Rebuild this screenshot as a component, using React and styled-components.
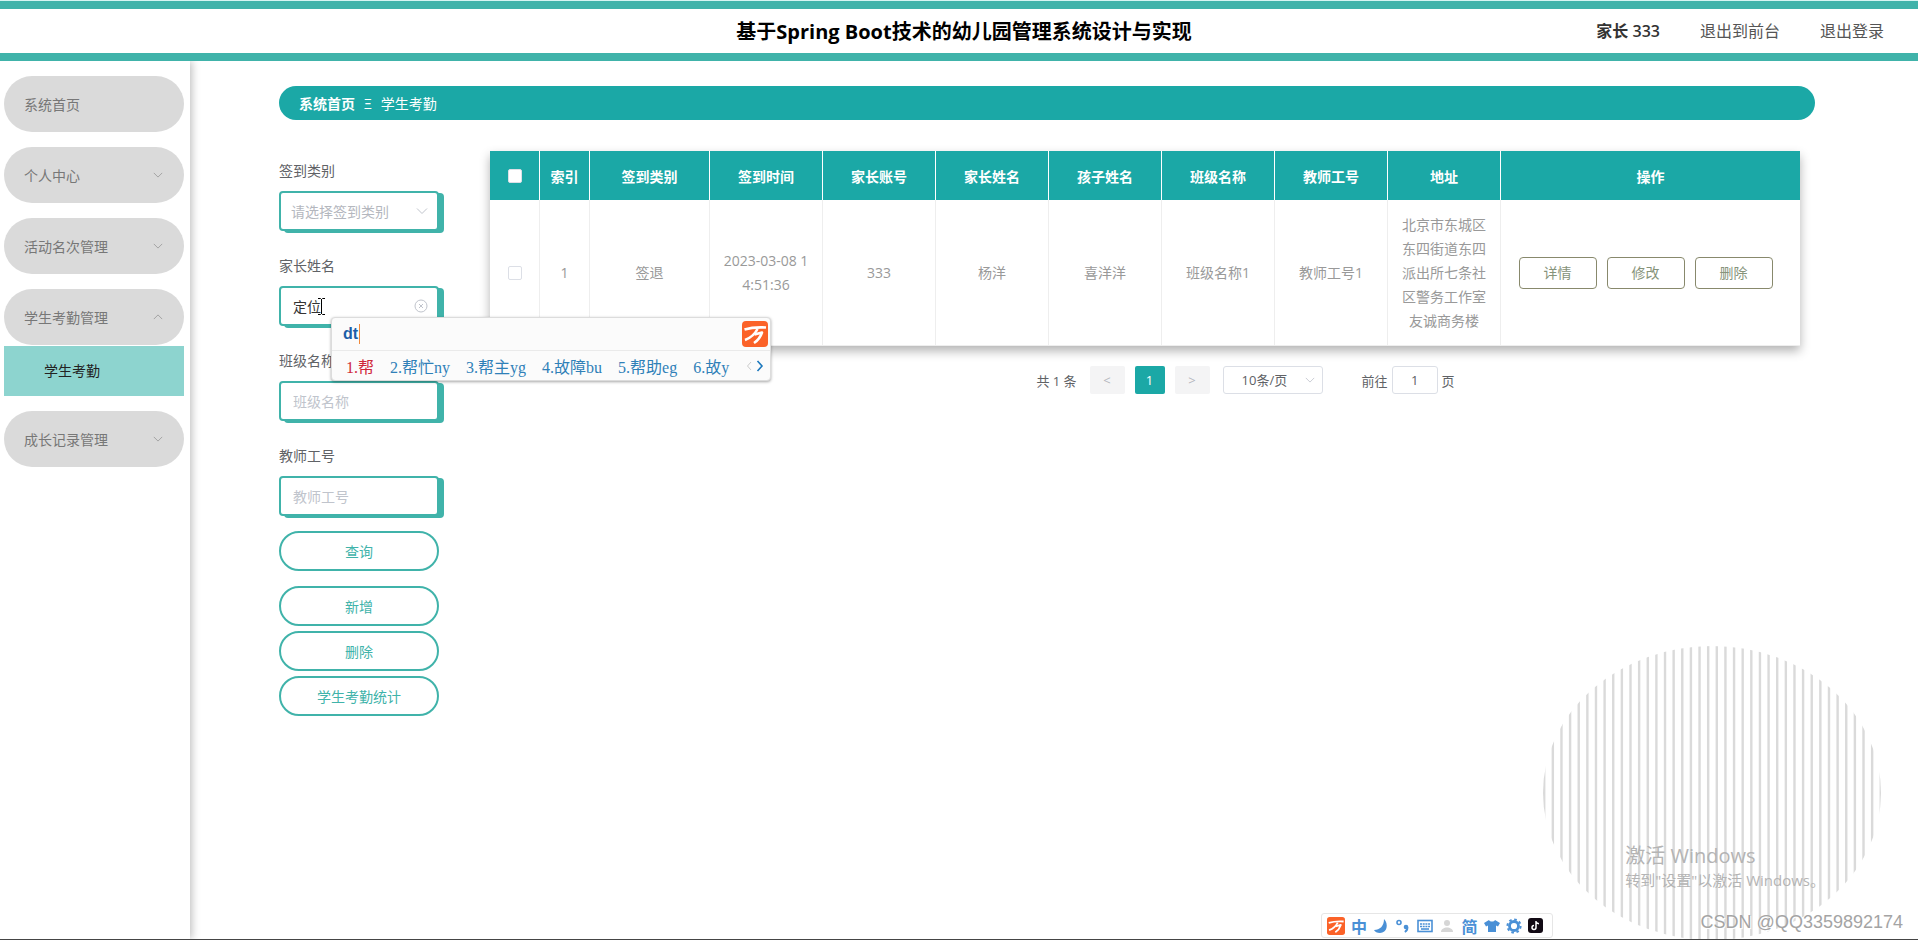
import React, { useState } from "react";
import styled, { createGlobalStyle, css } from "styled-components";

const teal = "#1ba8a6";
const tealLine = "#40b3aa";

const menu = [
  { name: "系统首页" },
  { name: "个人中心", children: [] },
  { name: "活动名次管理", children: [] },
  { name: "学生考勤管理", open: true, children: ["学生考勤"] },
  { name: "成长记录管理", children: [] },
];

const columns = [
  { name: "索引", width: 50 },
  { name: "签到类别", width: 120 },
  { name: "签到时间" },
  { name: "家长账号" },
  { name: "家长姓名" },
  { name: "孩子姓名" },
  { name: "班级名称" },
  { name: "教师工号" },
  { name: "地址" },
];

const rows = [
  [
    "1",
    "签退",
    "2023-03-08 14:51:36",
    "333",
    "杨洋",
    "喜洋洋",
    "班级名称1",
    "教师工号1",
    "北京市东城区东四街道东四派出所七条社区警务工作室友诚商务楼",
  ],
];

const candidates = ["1.帮", "2.帮忙ny", "3.帮主yg", "4.故障bu", "5.帮助eg", "6.故y"];

const Chevron = ({ up, size = 12 }) => (
  <svg width={size} height={size} viewBox="0 0 12 12" fill="none" stroke="currentColor" aria-hidden="true">
    <path d={up ? "M1 8.5 6 3.5l5 5" : "M1 3.5l5 5 5-5"} />
  </svg>
);

const WanLogo = ({ size }) => (
  <svg width={size} height={size} viewBox="0 0 26 26" aria-hidden="true">
    <rect width="26" height="26" rx="4" fill="#fb6228" />
    <g fill="none" stroke="#fff" strokeWidth="2.6" strokeLinejoin="round">
      <path d="M2.500 8.500C9 6.500 16 6 24 6.500" />
      <path d="M15.500 8C13 13 9.500 16.500 3 19" />
      <path d="M12.500 13.500L20 11.500C18.500 16 16.500 19 12 22" />
    </g>
  </svg>
);

const Stripes = () => {
  const lines = [];
  for (let i = 0; i < 40; i++) lines.push(1 + i * 8.63);
  return (
    <svg width="340" height="293" viewBox="0 0 340 293" aria-hidden="true">
      <clipPath id="disc">
        <ellipse cx="170" cy="147" rx="169" ry="147" />
      </clipPath>
      <g clipPath="url(#disc)" fill="#dadada">
        {lines.map((x) => (
          <rect key={x} x={x} y="0" width="2.4" height="293" />
        ))}
      </g>
    </svg>
  );
};

const App = () => {
  const [parent, setParent] = useState("定位");

  return (
    <Page>
      <GlobalStyle />
      <Header>
        <span />
        <Title>基于Spring Boot技术的幼儿园管理系统设计与实现</Title>
        <UserNav>
          <UserName>家长 333</UserName>
          <UserLink href="#front">退出到前台</UserLink>
          <UserLink href="#logout">退出登录</UserLink>
        </UserNav>
      </Header>
      <Body>
        <Sidebar>
          {menu.map((m) => (
            <MenuGroup key={m.name}>
              <MenuItem>
                {m.name}
                {m.children && <Chevron up={m.open} size={10} />}
              </MenuItem>
              {m.open && m.children.map((c) => <SubItem key={c} href="#sign">{c}</SubItem>)}
            </MenuGroup>
          ))}
        </Sidebar>
        <Main>
          <Breadcrumb aria-label="breadcrumb">
            <strong>系统首页</strong>
            <span>Ξ</span>
            <span>学生考勤</span>
          </Breadcrumb>
          <Content>
            <Search onSubmit={(e) => e.preventDefault()}>
              <Field>
                <Label htmlFor="type">签到类别</Label>
                <Control>
                  <SearchSelect id="type" defaultValue="">
                    <option value="">请选择签到类别</option>
                    <option>签到</option>
                    <option>签退</option>
                  </SearchSelect>
                  <ControlIcon><Chevron /></ControlIcon>
                </Control>
              </Field>
              <Field>
                <Label htmlFor="parent">家长姓名</Label>
                <Control>
                  <Input id="parent" value={parent} onChange={(e) => setParent(e.target.value)} />
                  <ControlIcon>
                    <svg width="14" height="14" viewBox="0 0 14 14" fill="none" stroke="currentColor">
                      <circle cx="7" cy="7" r="6" />
                      <path d="M5 5l4 4M9 5l-4 4" />
                    </svg>
                  </ControlIcon>
                  <Beam>
                    <svg width="7" height="17" viewBox="0 0 7 17" fill="none" stroke="#000">
                      <path d="M0 .5h2.500l1 1 1-1H7M3.500 1v15M0 16.500h2.500l1-1 1 1H7" />
                    </svg>
                  </Beam>
                  <Ime>
                    <ImeTop>
                      <ImeText>dt</ImeText>
                      <WanLogo size={26} />
                    </ImeTop>
                    <Candidates>
                      {candidates.map((c, i) => <Candidate key={c} $first={i === 0}>{c}</Candidate>)}
                      <Pager>
                        <svg width="18" height="12" viewBox="0 0 18 12" fill="none">
                          <path d="M5 2 1.500 6 5 10" stroke="#ccc" />
                          <path d="M11.500 1l4.500 5-4.500 5" stroke="#1c78bd" strokeWidth="1.6" />
                        </svg>
                      </Pager>
                    </Candidates>
                  </Ime>
                </Control>
              </Field>
              <Field>
                <Label htmlFor="klass">班级名称</Label>
                <Control><Input id="klass" placeholder="班级名称" /></Control>
              </Field>
              <Field>
                <Label htmlFor="teacher">教师工号</Label>
                <Control><Input id="teacher" placeholder="教师工号" /></Control>
              </Field>
              <PillButton $query type="submit">查询</PillButton>
              <PillButton type="button">新增</PillButton>
              <PillButton type="button">删除</PillButton>
              <PillButton type="button">学生考勤统计</PillButton>
            </Search>
            <Listing>
              <Table>
                <colgroup>
                  <Col $w={50} />
                  {columns.map((c) => <Col key={c.name} $w={c.width || 113} />)}
                  <col />
                </colgroup>
                <thead>
                  <tr>
                    <Th><Check type="checkbox" aria-label="全选" /></Th>
                    {columns.map((c) => <Th key={c.name}>{c.name}</Th>)}
                    <Th>操作</Th>
                  </tr>
                </thead>
                <tbody>
                  {rows.map((row) => (
                    <tr key={row[0]}>
                      <Td><Check type="checkbox" aria-label="选择" /></Td>
                      {row.map((v, i) => <Td key={i}>{v}</Td>)}
                      <Td>
                        <Actions>
                          <RowButton>详情</RowButton>
                          <RowButton>修改</RowButton>
                          <RowButton>删除</RowButton>
                        </Actions>
                      </Td>
                    </tr>
                  ))}
                </tbody>
              </Table>
              <Pagination>
                <span>共 1 条</span>
                <PageButtons>
                  <PageButton disabled aria-label="上一页">&lt;</PageButton>
                  <PageButton $active>1</PageButton>
                  <PageButton disabled aria-label="下一页">&gt;</PageButton>
                </PageButtons>
                <SizeWrap>
                  <SizeSelect aria-label="每页条数">
                    <option>10条/页</option>
                    <option>20条/页</option>
                  </SizeSelect>
                  <SizeIcon><Chevron size={10} /></SizeIcon>
                </SizeWrap>
                <Jump>
                  前往
                  <JumpInput defaultValue="1" />
                  页
                </Jump>
              </Pagination>
            </Listing>
          </Content>
        </Main>
      </Body>
      <Disc><Stripes /></Disc>
      <Activate>
        <ActivateTitle>激活 Windows</ActivateTitle>
        <div>转到"设置"以激活 Windows。</div>
      </Activate>
      <ImeBar>
        <WanLogo size={18} />
        <span>中</span>
        <svg width="16" height="16" viewBox="0 0 16 16" fill="#4a90d6">
          <path d="M11 1c5 5 3 14-4 14-3 0-5-1-6-3C7 12 11 8 11 1z" />
        </svg>
        <svg width="16" height="16" viewBox="0 0 16 16" fill="none" stroke="#4a90d6" strokeWidth="1.6">
          <circle cx="4" cy="4.500" r="2" />
          <circle cx="11" cy="9" r="2.300" fill="#4a90d6" stroke="none" />
          <path d="M12.400 9c.3 2.500-.6 4-2.600 5" strokeWidth="1.800" />
        </svg>
        <svg width="16" height="16" viewBox="0 0 16 16" fill="none" stroke="#4a90d6" strokeWidth="1.6">
          <rect x="1" y="2.500" width="14" height="11" />
          <path d="M3 6h10M3 8.500h10" strokeDasharray="2 .7" />
          <path d="M4 11h8" />
        </svg>
        <svg width="16" height="16" viewBox="0 0 16 16" fill="#d6d6d6">
          <circle cx="8" cy="5" r="3" />
          <path d="M2 14c0-6 12-6 12 0z" />
        </svg>
        <span>简</span>
        <svg width="16" height="16" viewBox="0 0 16 16" fill="#4a90d6">
          <path d="M5 2 0 5l2 3.500 2-1V14h8V7.500l2 1L16 5l-5-3c-1 2-5 2-6 0z" />
        </svg>
        <svg width="16" height="16" viewBox="0 0 16 16" fill="none" stroke="#4a90d6">
          <circle cx="8" cy="8" r="4.500" strokeWidth="2.800" />
          <circle cx="8" cy="8" r="6.600" strokeWidth="2" strokeDasharray="2.600 2.580" />
        </svg>
        <svg width="15" height="15" viewBox="0 0 15 15">
          <rect width="15" height="15" rx="3" fill="#120a14" />
          <path d="M8 3v6.500a2 2 0 1 1-2-2M8 3c.3 1.800 1.300 2.600 3 2.700" fill="none" stroke="#fff" strokeWidth="1.500" />
        </svg>
      </ImeBar>
      <Watermark>CSDN @QQ3359892174</Watermark>
    </Page>
  );
};

export default App;

const GlobalStyle = createGlobalStyle`
  * {
    box-sizing: border-box;
  }
  body {
    margin: 0;
    background: #fff;
    color: #606266;
    font-family: "Open Sans", "Noto Sans CJK SC", sans-serif;
    font-size: 14px;
  }
  button, input, select {
    font: inherit;
    outline: none;
  }
  a {
    text-decoration: none;
  }
`;
const Page = styled.div`
  position: relative;
  display: flex;
  flex-direction: column;
  min-height: 100vh;
  overflow: hidden;
  border-top: 1px solid #d5f5f2;
  border-bottom: 1px solid #454545;
`;
const Header = styled.header`
  position: relative;
  z-index: 1;
  display: grid;
  grid-template-columns: 1fr auto 1fr;
  align-items: center;
  height: 60px;
  padding: 0 34px 0 44px;
  border-top: 8px solid ${tealLine};
  border-bottom: 8px solid ${tealLine};
  background: #fff;
`;
const Title = styled.h1`
  margin: 0;
  padding-top: 2px;
  color: #000;
  font-size: 20px;
  line-height: 28px;
`;
const UserNav = styled.nav`
  display: flex;
  justify-content: flex-end;
  gap: 40px;
  font-size: 16px;
  line-height: 24px;
`;
const UserName = styled.span`
  color: #333;
  font-weight: 600;
`;
const UserLink = styled.a`
  color: #555;
`;
const Body = styled.div`
  display: flex;
  flex: 1;
`;
const Sidebar = styled.aside`
  flex: none;
  width: 190px;
  padding: 15px 6px 0 4px;
  box-shadow: 2px 0 8px rgba(0, 0, 0, 0.25);
`;
const MenuGroup = styled.div`
  margin-bottom: 15px;
`;
const MenuItem = styled.button`
  display: flex;
  justify-content: space-between;
  align-items: center;
  width: 100%;
  height: 56px;
  padding: 0 21px 0 20px;
  border: none;
  border-radius: 28px;
  background: #dadada;
  color: #777;
  svg {
    color: #999;
  }
`;
const SubItem = styled.a`
  display: block;
  margin: 1px 0;
  padding-left: 40px;
  background: #8dd4cf;
  color: #222;
  line-height: 50px;
`;
const Main = styled.main`
  flex: 1;
  min-width: 0;
  padding: 25px 103px 40px 89px;
`;
const Breadcrumb = styled.nav`
  display: flex;
  align-items: center;
  gap: 9px;
  height: 34px;
  padding: 0 20px;
  border-radius: 17px;
  background: ${teal};
  color: #fff;
`;
const Content = styled.div`
  display: flex;
  align-items: flex-start;
  gap: 51px;
  padding: 31px 15px 0 0;
`;
const Search = styled.form`
  display: flex;
  flex: none;
  flex-direction: column;
  gap: 5px;
  width: 160px;
`;
const Field = styled.div`
  margin-bottom: 10px;
`;
const Label = styled.label`
  display: block;
  height: 40px;
  line-height: 40px;
`;
const Control = styled.div`
  position: relative;
`;
const inputStyle = css`
  display: block;
  width: 100%;
  height: 40px;
  padding: 0 12px;
  border: 2px solid ${tealLine};
  border-radius: 4px;
  background: #fff;
  box-shadow: 5px 2px 0 ${tealLine};
`;
const Input = styled.input`
  ${inputStyle}
  color: #333;
  &::placeholder {
    color: #c0c4cc;
  }
`;
const SearchSelect = styled.select`
  ${inputStyle}
  padding: 0 10px;
  appearance: none;
  color: #b4b7be;
`;
const ControlIcon = styled.span`
  position: absolute;
  top: 0;
  right: 11px;
  display: flex;
  align-items: center;
  height: 100%;
  color: #c0c4cc;
`;
const Beam = styled.span`
  position: absolute;
  top: 12px;
  left: 39px;
  line-height: 0;
`;
const Ime = styled.div`
  position: absolute;
  z-index: 5;
  top: 31px;
  left: 52px;
  width: 440px;
  border: 1px solid #dcdcdc;
  border-radius: 4px;
  background: #fbfbfb;
  box-shadow: 0 1px 3px rgba(0, 0, 0, 0.35);
`;
const ImeTop = styled.div`
  display: flex;
  justify-content: space-between;
  align-items: center;
  height: 32px;
  padding: 0 2px 0 11px;
`;
const ImeText = styled.span`
  padding-right: 1px;
  border-right: 1px solid #f08a3c;
  color: #1b5fa8;
  font-family: "Liberation Sans", sans-serif;
  font-size: 16px;
  font-weight: 700;
  line-height: 20px;
`;
const Candidates = styled.div`
  display: flex;
  align-items: center;
  gap: 16px;
  height: 30px;
  padding: 0 6px 0 14px;
  border-top: 1px solid #eaeaea;
  font-family: "Liberation Serif", "Noto Sans CJK SC", serif;
  font-size: 16px;
  white-space: nowrap;
`;
const Candidate = styled.span`
  color: ${({ $first }) => ($first ? "#d0283a" : "#2f80b8")};
`;
const Pager = styled.span`
  display: flex;
  margin-left: auto;
`;
const PillButton = styled.button`
  height: 40px;
  margin-bottom: ${({ $query }) => ($query ? "10px" : "0")};
  border: 2px solid ${tealLine};
  border-radius: 20px;
  background: #fff;
  color: ${tealLine};
`;
const Listing = styled.section`
  flex: 1;
  min-width: 0;
`;
const Table = styled.table`
  width: 100%;
  table-layout: fixed;
  border-collapse: separate;
  border-spacing: 0;
  box-shadow: 0 5px 10px rgba(0, 0, 0, 0.3);
`;
const Col = styled.col`
  width: ${({ $w }) => $w}px;
`;
const Th = styled.th`
  height: 49px;
  padding: 0;
  border-right: 1px solid #fff;
  background: ${teal};
  color: #fff;
  &:last-child {
    border-right: none;
  }
`;
const Td = styled.td`
  padding: 13px 10px 12px;
  border-right: 1px solid #eee;
  border-bottom: 1px solid #eee;
  color: #999;
  line-height: 24px;
  text-align: center;
  word-break: break-all;
  &:last-child {
    border-right: none;
  }
`;
const Check = styled.input`
  display: block;
  width: 14px;
  height: 14px;
  margin: 0 auto;
  border: 1px solid #dcdfe6;
  border-radius: 2px;
  appearance: none;
  background: #fff;
`;
const Actions = styled.div`
  display: flex;
  justify-content: center;
  gap: 10px;
  padding-right: 10px;
`;
const RowButton = styled.button`
  width: 78px;
  height: 32px;
  padding: 0;
  border: 1px solid #88896c;
  border-radius: 4px;
  background: #fff;
  color: #86937a;
`;
const Pagination = styled.div`
  display: flex;
  justify-content: center;
  align-items: center;
  gap: 13px;
  padding: 20px 0 0 201px;
  font-size: 13px;
`;
const PageButtons = styled.div`
  display: flex;
  gap: 10px;
`;
const PageButton = styled.button`
  width: ${({ $active }) => ($active ? "30px" : "35px")};
  height: 28px;
  padding: 0;
  border: none;
  border-radius: 2px;
  background: ${({ $active }) => ($active ? teal : "#f4f4f5")};
  color: ${({ $active }) => ($active ? "#fff" : "#b4b7be")};
`;
const SizeWrap = styled.div`
  position: relative;
  width: 100px;
  margin-right: 26px;
`;
const SizeSelect = styled.select`
  display: block;
  width: 100%;
  height: 28px;
  padding: 0 18px;
  border: 1px solid #dcdfe6;
  border-radius: 3px;
  appearance: none;
  background: #fff;
  color: #606266;
`;
const SizeIcon = styled.span`
  position: absolute;
  top: 0;
  right: 8px;
  display: flex;
  align-items: center;
  height: 100%;
  color: #c0c4cc;
`;
const Jump = styled.label`
  display: flex;
  align-items: center;
  gap: 4px;
`;
const JumpInput = styled.input`
  width: 46px;
  height: 28px;
  padding: 0;
  border: 1px solid #dcdfe6;
  border-radius: 3px;
  color: #606266;
  text-align: center;
`;
const Disc = styled.div`
  position: absolute;
  right: 36px;
  bottom: 0;
  line-height: 0;
`;
const Activate = styled.div`
  position: absolute;
  right: 93px;
  bottom: 49px;
  color: #b4b4b4;
  font-size: 15px;
  line-height: 20px;
`;
const ActivateTitle = styled.div`
  font-size: 20px;
  line-height: 28px;
`;
const ImeBar = styled.div`
  position: absolute;
  right: 365px;
  bottom: 1px;
  display: flex;
  justify-content: space-between;
  align-items: center;
  width: 232px;
  height: 25px;
  padding: 0 9px 0 5px;
  border: 1px solid #e6e6e6;
  border-radius: 3px;
  background: #fff;
  color: #4a90d6;
  font-size: 16px;
  font-weight: 700;
`;
const Watermark = styled.div`
  position: absolute;
  right: 15px;
  bottom: 6px;
  color: #a4a4a4;
  font-family: "Liberation Sans", sans-serif;
  font-size: 18px;
  line-height: 22px;
  text-shadow: 1px 1px 0 #fff;
`;
